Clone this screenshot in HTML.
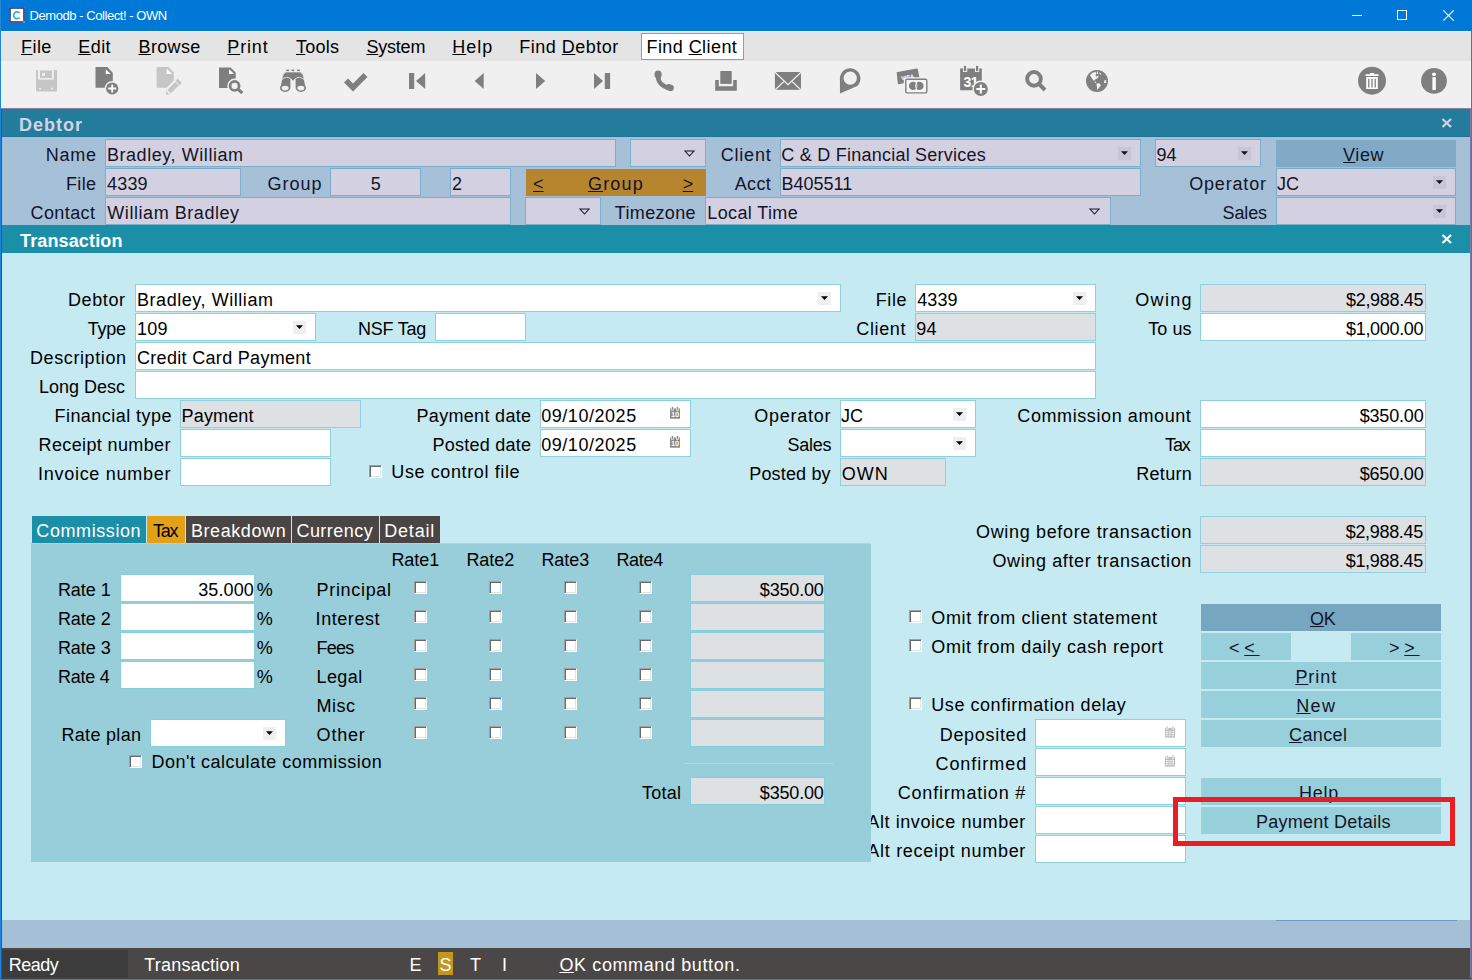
<!DOCTYPE html><html><head><meta charset="utf-8"><title>Collect</title><style>
*{margin:0;padding:0;box-sizing:border-box}
html,body{width:1472px;height:980px;overflow:hidden;background:#C5EAF2;font-family:"Liberation Sans", sans-serif}
.r{position:absolute}
.t{position:absolute;white-space:nowrap;font-family:"Liberation Sans", sans-serif}
.cb{position:absolute;width:13px;height:13px;background:#fff;border-top:1px solid #A0A0A0;border-left:1px solid #A0A0A0;border-right:1px solid #fff;border-bottom:1px solid #fff;box-shadow:inset 1px 1px 0 #696969, inset -1px -1px 0 #E3E3E3}
u{text-decoration:underline;text-underline-offset:1px;text-decoration-thickness:1px}
</style></head><body>
<div class="r" style="left:0px;top:0px;width:1472px;height:980px;background:#1A86E0;"></div>
<div class="r" style="left:0px;top:0px;width:1472px;height:31px;background:#0078D7;"></div>
<div class="r" style="left:0px;top:0px;width:1px;height:31px;background:#2A88D8;"></div>
<svg class="r" style="left:9px;top:7px" width="17" height="17"><rect x="0" y="0" width="16" height="16" fill="#d8d8e8"/><rect x="1" y="1" width="14" height="14" fill="#fff" stroke="#2c3570" stroke-width="1.6"/><path d="M10.6 6.1a3.4 3.4 0 1 0 0 4.4" fill="none" stroke="#3ab0c0" stroke-width="1.7"/><rect x="14" y="14" width="2" height="2" fill="#3ab0c0"/></svg>
<div class="t" style="left:29.60px;top:8px;color:#fff;font-size:13px;line-height:16px;letter-spacing:-0.445px;">Demodb - Collect! - OWN</div>
<div class="r" style="left:1352px;top:15px;width:10px;height:1px;background:#fff;"></div>
<div class="r" style="left:1397px;top:10px;width:10px;height:10px;background:transparent;border:1px solid #fff;"></div>
<svg class="r" style="left:1442px;top:9px" width="13" height="13"><path d="M1.3 1.3L11.7 11.7M11.7 1.3L1.3 11.7" stroke="#fff" stroke-width="1.15"/></svg>
<div class="r" style="left:1px;top:31px;width:1470px;height:30px;background:#E4E4E4;"></div>
<div class="r" style="left:1px;top:31px;width:1470px;height:1px;background:#F4F4F4;"></div>
<div class="t" style="left:21.10px;top:37px;color:#000;font-size:18px;line-height:20px;letter-spacing:0.400px;"><u>F</u>ile</div>
<div class="t" style="left:78.20px;top:37px;color:#000;font-size:18px;line-height:20px;letter-spacing:0.467px;"><u>E</u>dit</div>
<div class="t" style="left:138.50px;top:37px;color:#000;font-size:18px;line-height:20px;letter-spacing:0.360px;"><u>B</u>rowse</div>
<div class="t" style="left:227.30px;top:37px;color:#000;font-size:18px;line-height:20px;letter-spacing:0.850px;"><u>P</u>rint</div>
<div class="t" style="left:296.00px;top:37px;color:#000;font-size:18px;line-height:20px;letter-spacing:0.250px;"><u>T</u>ools</div>
<div class="t" style="left:366.40px;top:37px;color:#000;font-size:18px;line-height:20px;letter-spacing:-0.200px;"><u>S</u>ystem</div>
<div class="t" style="left:452.30px;top:37px;color:#000;font-size:18px;line-height:20px;letter-spacing:0.967px;"><u>H</u>elp</div>
<div class="t" style="left:519.30px;top:37px;color:#000;font-size:18px;line-height:20px;letter-spacing:0.500px;">Find <u>D</u>ebtor</div>
<div class="r" style="left:641px;top:33px;width:103px;height:27px;background:#fff;border:1px solid #9A9A9A;"></div>
<div class="t" style="left:646.50px;top:37px;color:#000;font-size:18px;line-height:20px;letter-spacing:0.430px;">Find <u>C</u>lient</div>
<div class="r" style="left:1px;top:61px;width:1470px;height:47px;background:#F0F0F0;"></div>
<div class="r" style="left:1px;top:61px;width:1px;height:47px;background:#FAFAFA;"></div>
<div class="r" style="left:1470px;top:61px;width:1px;height:47px;background:#FAFAFA;"></div>
<div class="r" style="left:1px;top:108px;width:1470px;height:1px;background:#8A80A0;"></div>
<svg class="r" style="left:0;top:0" width="1472" height="108" viewBox="0 0 1472 108">
<!-- save (disabled) -->
<rect x="36" y="70" width="21" height="21.5" fill="#C6C6C6"/>
<rect x="38" y="70" width="15.8" height="9.6" fill="#F0F0F0"/>
<rect x="40" y="70.5" width="12" height="7.5" fill="#C6C6C6"/>
<rect x="42" y="73" width="3" height="2.8" fill="#F0F0F0"/>
<rect x="39" y="87.8" width="2.2" height="1.6" fill="#F0F0F0"/>
<rect x="50.8" y="87.8" width="2.2" height="1.6" fill="#F0F0F0"/>
<!-- new doc -->
<path d="M95.5 67H107.3L112.8 72.7V87.7H95.5Z" fill="#7F7F7F"/>
<path d="M105.8 69.4V74.1H110.8Z" fill="#fff"/>
<circle cx="112.2" cy="88.5" r="7.5" fill="#F0F0F0"/>
<circle cx="112.2" cy="88.5" r="6.1" fill="#7F7F7F"/>
<path d="M108.2 88.5H116.2M112.2 84.5V92.5" stroke="#fff" stroke-width="1.8"/>
<!-- edit doc (disabled) -->
<path d="M156.6 67.1H168.6L173.7 72.3V80.7L166.7 87.7H156.6Z" fill="#C6C6C6"/>
<path d="M166.7 68.8V73.9H172Z" fill="#fff"/>
<path d="M167.3 89.9L175.4 81.9L179 85.3L170.8 93.4Z" fill="#C6C6C6"/>
<path d="M176.4 80.9L177.6 79.5L181 83L179.7 84.3Z" fill="#C6C6C6" stroke="#C6C6C6" stroke-width="1.2"/>
<path d="M166 91L166 94.7L169.8 94.7Z" fill="#C6C6C6"/>
<!-- search doc -->
<path d="M219 67.5H230.6L235.7 72.5V88.1H219Z" fill="#7F7F7F"/>
<path d="M229.1 69.2V74H234.2Z" fill="#fff"/>
<circle cx="234.6" cy="85.9" r="7.3" fill="#F0F0F0"/>
<path d="M237.6 89L242.5 93.2" stroke="#F0F0F0" stroke-width="6"/>
<circle cx="234.6" cy="85.9" r="4.5" fill="none" stroke="#7F7F7F" stroke-width="2.7"/>
<path d="M237.6 88.9L242.3 93" stroke="#7F7F7F" stroke-width="3.2"/>
<!-- binoculars -->
<path d="M280.2 88.5L282.2 79.6Q286.2 75.6 290.4 78.6V88.5Z" fill="#7F7F7F"/>
<path d="M305.8 88.5L303.8 79.6Q299.8 75.6 295.6 78.6V88.5Z" fill="#7F7F7F"/>
<path d="M285.6 72H300.6Q303.6 74 304.2 79.4Q299.2 75.6 295.2 78.8L293 81.2L290.8 78.8Q286.8 75.6 281.8 79.4Q282.4 74 285.6 72Z" fill="#7F7F7F" stroke="#F0F0F0" stroke-width="0.7"/>
<rect x="286.2" y="69.6" width="2.9" height="1.5" fill="#7F7F7F"/>
<rect x="291.6" y="69.6" width="2.6" height="1.5" fill="#7F7F7F"/>
<rect x="297" y="69.6" width="2.9" height="1.5" fill="#7F7F7F"/>
<ellipse cx="285.1" cy="88.1" rx="5.1" ry="3.8" fill="#7F7F7F"/>
<ellipse cx="300.9" cy="88.1" rx="5.1" ry="3.8" fill="#7F7F7F"/>
<ellipse cx="285.1" cy="88.1" rx="3.5" ry="2.3" fill="#F0F0F0"/>
<ellipse cx="300.9" cy="88.1" rx="3.5" ry="2.3" fill="#F0F0F0"/>
<!-- check -->
<path d="M344 82.5L348 78.5L353 83.5L363.5 73L367.5 77L353 91.5Z" fill="#7F7F7F"/>
<!-- first -->
<rect x="409" y="73" width="5.2" height="16" fill="#7F7F7F"/>
<path d="M425.2 73V89L416 81Z" fill="#7F7F7F"/>
<!-- prev -->
<path d="M483.7 73V89L474.7 81Z" fill="#7F7F7F"/>
<!-- next -->
<path d="M536 73V89L545.2 81Z" fill="#7F7F7F"/>
<!-- last -->
<path d="M594 73V89L603 81Z" fill="#7F7F7F"/>
<rect x="604.8" y="73" width="5.3" height="16" fill="#7F7F7F"/>
<!-- phone -->
<path d="M658.3 76.5Q657.8 84.5 668.5 88" fill="none" stroke="#7F7F7F" stroke-width="4.6"/>
<ellipse cx="658.1" cy="74.6" rx="3.6" ry="4.1" fill="#7F7F7F"/>
<ellipse cx="669.8" cy="87.6" rx="4.1" ry="3.4" fill="#7F7F7F" transform="rotate(20 669.8 87.6)"/>
<!-- tray -->
<rect x="720.3" y="71" width="11.4" height="12.9" fill="#7F7F7F"/>
<path d="M715.2 80H718.8V86.2H733.2V80H736.8V90.8H715.2Z" fill="#7F7F7F"/>
<!-- mail -->
<rect x="774.9" y="72" width="26.1" height="17.8" fill="#7F7F7F"/>
<path d="M775 72.2L788 84.6L801 72.2M783.8 81.6L775.2 89.7M792.2 81.6L800.8 89.7" fill="none" stroke="#F0F0F0" stroke-width="1.3"/>
<!-- bubble -->
<path fill-rule="evenodd" d="M839.9 78.2A10.3 10.3 0 1 1 857.3 86L840 93.4ZM843.6 78.2A6.6 6.6 0 1 0 856.8 78.2A6.6 6.6 0 1 0 843.6 78.2Z" fill="#7F7F7F"/>
<!-- visa -->
<path d="M896.6 72.3L916.4 68.4Q917.5 68.3 917.8 69.4L919.8 79.5L899 84.2Q898 84.4 897.8 83.4Z" fill="#7F7F7F"/>
<text x="907.5" y="79.2" font-family="Liberation Sans" font-weight="bold" font-size="5.6" fill="#fff" text-anchor="middle" transform="rotate(-10 907.5 77)">VISA</text>
<rect x="903.8" y="77.3" width="25" height="17.6" rx="2" fill="#F0F0F0"/>
<rect x="905.8" y="79.3" width="21" height="13.6" rx="1.5" fill="#f6f6f6" stroke="#7F7F7F" stroke-width="1.4"/>
<circle cx="913.1" cy="85.9" r="4.2" fill="#7F7F7F"/>
<circle cx="919.4" cy="85.9" r="4.2" fill="#7F7F7F"/>
<path d="M916.25 83.1Q914.7 85.9 916.25 88.7Q917.8 85.9 916.25 83.1Z" fill="none" stroke="#fff" stroke-width="0.8"/>
<!-- calendar plus -->
<path d="M960.1 68.4H963V72H967.2V68.4H975V72H979.2V68.4H981.8V90.3H960.1Z" fill="#7F7F7F"/>
<rect x="963.9" y="65.9" width="2.2" height="5.2" fill="#7F7F7F"/>
<rect x="976" y="65.9" width="2.2" height="5.2" fill="#7F7F7F"/>
<text x="970.8" y="87.3" font-family="Liberation Sans" font-weight="bold" font-size="14" fill="#fff" text-anchor="middle" letter-spacing="-0.5">31</text>
<circle cx="980.8" cy="89" r="8.4" fill="#F0F0F0"/>
<circle cx="980.8" cy="89" r="7" fill="#7F7F7F"/>
<path d="M976.3 89H985.3M980.8 84.5V93.5" stroke="#fff" stroke-width="2"/>
<!-- search -->
<circle cx="1034" cy="78.9" r="6.85" fill="none" stroke="#7F7F7F" stroke-width="3.9"/>
<path d="M1038.5 83.5L1045 90" stroke="#7F7F7F" stroke-width="3.9"/>
<!-- globe -->
<circle cx="1097" cy="81" r="11" fill="#7F7F7F"/>
<path d="M1090 75.2L1092.1 73L1095.5 71.8L1096.4 74L1095.5 75.2L1096.1 76.7L1097.9 75.5L1098.8 76.4L1097.3 78.2L1095.2 79.5L1093.9 81L1092.4 78.9L1090.9 76.7Z" fill="#f4f4f4"/>
<path d="M1096.9 71.6H1098V74H1096.9Z" fill="#f4f4f4"/>
<path d="M1099.4 72.6L1101 73.3L1100.6 75L1099.6 74.3Z" fill="#f4f4f4"/>
<circle cx="1095.5" cy="82.2" r="0.7" fill="#f4f4f4"/>
<path d="M1096.4 83.4L1099.1 83.3L1101 85.6L1099.1 87.6L1097.3 90.4L1096.8 85.8Z" fill="#f4f4f4"/>
<path d="M1104.4 80.5L1106.3 79.9L1106 83.1L1104 83Z" fill="#f4f4f4"/>
<!-- trash -->
<circle cx="1372" cy="80.7" r="14" fill="#7F7F7F"/>
<path d="M1365.6 74.3H1378.6V76H1365.6ZM1370 72.9H1374.2V74.3H1370Z" fill="#fff"/>
<path d="M1366.2 77H1377.8V89H1366.2Z" fill="#fff"/>
<path d="M1368.8 78.8V87.4M1372 78.8V87.4M1375.2 78.8V87.4" stroke="#7F7F7F" stroke-width="1.3"/>
<!-- info -->
<circle cx="1434" cy="80.9" r="12.9" fill="#7F7F7F"/>
<circle cx="1434" cy="74.3" r="1.9" fill="#fff"/>
<rect x="1432.4" y="77.2" width="3.4" height="12.8" fill="#fff"/>
</svg>
<div class="r" style="left:1px;top:109px;width:1470px;height:869px;background:#7E7AA8;"></div>
<div class="r" style="left:1px;top:109px;width:1px;height:869px;background:#4A4A88;"></div>
<div class="r" style="left:2px;top:109px;width:1468px;height:28px;background:#237C9C;"></div>
<div class="r" style="left:2px;top:136px;width:1468px;height:1px;background:#1A7598;"></div>
<div class="t" style="left:19.00px;top:115px;color:#D6D2E6;font-size:18px;line-height:20px;font-weight:bold;letter-spacing:0.980px;">Debtor</div>
<svg class="r" style="left:1441px;top:118px" width="12" height="10"><path d="M1.5 1L10 9M10 1L1.5 9" stroke="#D6D2E6" stroke-width="2.2"/></svg>
<div class="r" style="left:2px;top:137px;width:1468px;height:88px;background:#A6C0D7;"></div>
<div class="t" style="left:45.80px;top:145px;color:#141428;font-size:18px;line-height:20px;letter-spacing:0.733px;">Name</div>
<div class="r" style="left:105px;top:139px;width:511px;height:28px;background:#D3D1E1;border:1px solid #7AAFCB;"></div>
<div class="t" style="left:106.90px;top:145px;color:#141428;font-size:18px;line-height:20px;letter-spacing:0.567px;">Bradley, William</div>
<div class="r" style="left:630px;top:139px;width:76px;height:28px;background:#D3D1E1;border:1px solid #7AAFCB;"></div>
<svg class="r" style="left:684px;top:150px" width="11" height="7"><path d="M1 1h9l-4.5 5z" fill="none" stroke="#1a1a2a" stroke-width="1.1"/></svg>
<div class="t" style="left:720.70px;top:145px;color:#141428;font-size:18px;line-height:20px;letter-spacing:0.800px;">Client</div>
<div class="r" style="left:780px;top:139px;width:361px;height:28px;background:#D3D1E1;border:1px solid #7AAFCB;"></div>
<div class="t" style="left:781.30px;top:145px;color:#141428;font-size:18px;line-height:20px;letter-spacing:0.235px;">C &amp; D Financial Services</div>
<div class="r" style="left:1118px;top:147px;width:13px;height:13px;background:#C7C5D6;"></div>
<svg class="r" style="left:1118px;top:147px" width="13" height="13"><path d="M3 4.3H10L6.5 8Z" fill="#101020"/></svg>
<div class="r" style="left:1155px;top:139px;width:106px;height:28px;background:#D3D1E1;border:1px solid #7AAFCB;"></div>
<div class="t" style="left:1156.50px;top:145px;color:#141428;font-size:18px;line-height:20px;letter-spacing:0.000px;">94</div>
<div class="r" style="left:1238px;top:147px;width:13px;height:13px;background:#C7C5D6;"></div>
<svg class="r" style="left:1238px;top:147px" width="13" height="13"><path d="M3 4.3H10L6.5 8Z" fill="#101020"/></svg>
<div class="r" style="left:1276px;top:140px;width:180px;height:27px;background:#80AAC5;"></div>
<div class="t" style="left:1343.00px;top:145px;color:#141428;font-size:18px;line-height:20px;letter-spacing:0.633px;"><u>V</u>iew</div>
<div class="t" style="left:66.00px;top:174px;color:#141428;font-size:18px;line-height:20px;letter-spacing:0.333px;">File</div>
<div class="r" style="left:105px;top:168px;width:136px;height:28px;background:#D3D1E1;border:1px solid #7AAFCB;"></div>
<div class="t" style="left:107.10px;top:174px;color:#141428;font-size:18px;line-height:20px;letter-spacing:0.133px;">4339</div>
<div class="t" style="left:267.60px;top:174px;color:#141428;font-size:18px;line-height:20px;letter-spacing:1.000px;">Group</div>
<div class="r" style="left:330px;top:168px;width:91px;height:28px;background:#D3D1E1;border:1px solid #7AAFCB;"></div>
<div class="t" style="left:176px;width:400px;text-align:center;top:174px;color:#141428;font-size:18px;line-height:20px;letter-spacing:0.300px;">5</div>
<div class="r" style="left:450px;top:168px;width:61px;height:28px;background:#D3D1E1;border:1px solid #7AAFCB;"></div>
<div class="t" style="left:452px;top:174px;color:#141428;font-size:18px;line-height:20px;letter-spacing:0.300px;">2</div>
<div class="r" style="left:526px;top:169px;width:180px;height:27px;background:#B8852F;"></div>
<div class="t" style="left:533.00px;top:174px;color:#141428;font-size:18px;line-height:20px;letter-spacing:0.000px;"><u>&lt;</u></div>
<div class="t" style="left:588.00px;top:174px;color:#141428;font-size:18px;line-height:20px;letter-spacing:1.175px;"><u>G</u>roup</div>
<div class="t" style="left:682.70px;top:174px;color:#141428;font-size:18px;line-height:20px;letter-spacing:0.000px;"><u>&gt;</u></div>
<div class="t" style="left:734.80px;top:174px;color:#141428;font-size:18px;line-height:20px;letter-spacing:0.300px;">Acct</div>
<div class="r" style="left:780px;top:168px;width:361px;height:28px;background:#D3D1E1;border:1px solid #7AAFCB;"></div>
<div class="t" style="left:781.60px;top:174px;color:#141428;font-size:18px;line-height:20px;letter-spacing:-0.017px;">B405511</div>
<div class="t" style="left:1189.20px;top:174px;color:#141428;font-size:18px;line-height:20px;letter-spacing:0.829px;">Operator</div>
<div class="r" style="left:1276px;top:168px;width:180px;height:28px;background:#D3D1E1;border:1px solid #7AAFCB;"></div>
<div class="t" style="left:1277px;top:174px;color:#141428;font-size:18px;line-height:20px;letter-spacing:0.000px;">JC</div>
<div class="r" style="left:1433px;top:176px;width:13px;height:13px;background:#C7C5D6;"></div>
<svg class="r" style="left:1433px;top:176px" width="13" height="13"><path d="M3 4.3H10L6.5 8Z" fill="#101020"/></svg>
<div class="t" style="left:30.50px;top:203px;color:#141428;font-size:18px;line-height:20px;letter-spacing:0.417px;">Contact</div>
<div class="r" style="left:105px;top:197px;width:406px;height:28px;background:#D3D1E1;border:1px solid #7AAFCB;"></div>
<div class="t" style="left:107.30px;top:203px;color:#141428;font-size:18px;line-height:20px;letter-spacing:0.557px;">William Bradley</div>
<div class="r" style="left:525px;top:197px;width:76px;height:28px;background:#D3D1E1;border:1px solid #7AAFCB;"></div>
<svg class="r" style="left:579px;top:208px" width="11" height="7"><path d="M1 1h9l-4.5 5z" fill="none" stroke="#1a1a2a" stroke-width="1.1"/></svg>
<div class="t" style="left:614.80px;top:203px;color:#141428;font-size:18px;line-height:20px;letter-spacing:0.343px;">Timezone</div>
<div class="r" style="left:705px;top:197px;width:406px;height:28px;background:#D3D1E1;border:1px solid #7AAFCB;"></div>
<div class="t" style="left:707.30px;top:203px;color:#141428;font-size:18px;line-height:20px;letter-spacing:0.378px;">Local Time</div>
<svg class="r" style="left:1089px;top:208px" width="11" height="7"><path d="M1 1h9l-4.5 5z" fill="none" stroke="#1a1a2a" stroke-width="1.1"/></svg>
<div class="t" style="left:1222.50px;top:203px;color:#141428;font-size:18px;line-height:20px;letter-spacing:-0.125px;">Sales</div>
<div class="r" style="left:1276px;top:197px;width:180px;height:28px;background:#D3D1E1;border:1px solid #7AAFCB;"></div>
<div class="r" style="left:1433px;top:205px;width:13px;height:13px;background:#C7C5D6;"></div>
<svg class="r" style="left:1433px;top:205px" width="13" height="13"><path d="M3 4.3H10L6.5 8Z" fill="#101020"/></svg>
<div class="r" style="left:2px;top:225px;width:1468px;height:28px;background:#1C8FA8;"></div>
<div class="t" style="left:20.00px;top:231px;color:#fff;font-size:18px;line-height:20px;font-weight:bold;letter-spacing:0.140px;">Transaction</div>
<svg class="r" style="left:1441px;top:234px" width="12" height="10"><path d="M1.5 1L10 9M10 1L1.5 9" stroke="#fff" stroke-width="2.2"/></svg>
<div class="r" style="left:2px;top:253px;width:1468px;height:667px;background:#C5EAF2;"></div>
<div class="t" style="left:67.90px;top:290px;color:#000;font-size:18px;line-height:20px;letter-spacing:0.620px;">Debtor</div>
<div class="r" style="left:135px;top:284px;width:706px;height:28px;background:#fff;border:1px solid #8ED0E0;"></div>
<div class="t" style="left:137.00px;top:290px;color:#000;font-size:18px;line-height:20px;letter-spacing:0.553px;">Bradley, William</div>
<div class="r" style="left:818px;top:292px;width:13px;height:13px;background:#EFEFEF;"></div>
<svg class="r" style="left:818px;top:292px" width="13" height="13"><path d="M3 4.3H10L6.5 8Z" fill="#000"/></svg>
<div class="t" style="left:875.80px;top:290px;color:#000;font-size:18px;line-height:20px;letter-spacing:0.567px;">File</div>
<div class="r" style="left:915px;top:284px;width:181px;height:28px;background:#fff;border:1px solid #8ED0E0;"></div>
<div class="t" style="left:917.20px;top:290px;color:#000;font-size:18px;line-height:20px;letter-spacing:0.133px;">4339</div>
<div class="r" style="left:1073px;top:292px;width:13px;height:13px;background:#EFEFEF;"></div>
<svg class="r" style="left:1073px;top:292px" width="13" height="13"><path d="M3 4.3H10L6.5 8Z" fill="#000"/></svg>
<div class="t" style="left:1135.30px;top:290px;color:#000;font-size:18px;line-height:20px;letter-spacing:1.300px;">Owing</div>
<div class="r" style="left:1200px;top:284px;width:226px;height:28px;background:#DEE1E3;border:1px solid #8ED0E0;"></div>
<div class="t" style="left:1346.00px;top:290px;color:#000;font-size:18px;line-height:20px;letter-spacing:-0.312px;">$2,988.45</div>
<div class="t" style="left:87.80px;top:319px;color:#000;font-size:18px;line-height:20px;letter-spacing:-0.267px;">Type</div>
<div class="r" style="left:135px;top:313px;width:181px;height:28px;background:#fff;border:1px solid #8ED0E0;"></div>
<div class="t" style="left:137.00px;top:319px;color:#000;font-size:18px;line-height:20px;letter-spacing:0.200px;">109</div>
<div class="r" style="left:293px;top:321px;width:13px;height:13px;background:#EFEFEF;"></div>
<svg class="r" style="left:293px;top:321px" width="13" height="13"><path d="M3 4.3H10L6.5 8Z" fill="#000"/></svg>
<div class="t" style="left:358.00px;top:319px;color:#000;font-size:18px;line-height:20px;letter-spacing:-0.233px;">NSF Tag</div>
<div class="r" style="left:435px;top:313px;width:91px;height:28px;background:#fff;border:1px solid #8ED0E0;"></div>
<div class="t" style="left:856.30px;top:319px;color:#000;font-size:18px;line-height:20px;letter-spacing:0.640px;">Client</div>
<div class="r" style="left:915px;top:313px;width:181px;height:28px;background:#DEE1E3;border:1px solid #8ED0E0;"></div>
<div class="t" style="left:916.20px;top:319px;color:#000;font-size:18px;line-height:20px;letter-spacing:0.300px;">94</div>
<div class="t" style="left:1148.20px;top:319px;color:#000;font-size:18px;line-height:20px;letter-spacing:0.075px;">To us</div>
<div class="r" style="left:1200px;top:313px;width:226px;height:28px;background:#fff;border:1px solid #8ED0E0;"></div>
<div class="t" style="left:1346.00px;top:319px;color:#000;font-size:18px;line-height:20px;letter-spacing:-0.312px;">$1,000.00</div>
<div class="t" style="left:30.00px;top:348px;color:#000;font-size:18px;line-height:20px;letter-spacing:0.600px;">Description</div>
<div class="r" style="left:135px;top:342px;width:961px;height:28px;background:#fff;border:1px solid #8ED0E0;"></div>
<div class="t" style="left:137.00px;top:348px;color:#000;font-size:18px;line-height:20px;letter-spacing:0.311px;">Credit Card Payment</div>
<div class="t" style="left:39.00px;top:377px;color:#000;font-size:18px;line-height:20px;letter-spacing:0.000px;">Long Desc</div>
<div class="r" style="left:135px;top:371px;width:961px;height:28px;background:#fff;border:1px solid #8ED0E0;"></div>
<div class="t" style="left:54.50px;top:406px;color:#000;font-size:18px;line-height:20px;letter-spacing:0.454px;">Financial type</div>
<div class="r" style="left:180px;top:400px;width:181px;height:28px;background:#DEE1E3;border:1px solid #8ED0E0;"></div>
<div class="t" style="left:181.60px;top:406px;color:#000;font-size:18px;line-height:20px;letter-spacing:0.150px;">Payment</div>
<div class="t" style="left:416.50px;top:406px;color:#000;font-size:18px;line-height:20px;letter-spacing:0.318px;">Payment date</div>
<div class="r" style="left:540px;top:400px;width:151px;height:28px;background:#fff;border:1px solid #8ED0E0;"></div>
<div class="t" style="left:541.20px;top:406px;color:#000;font-size:18px;line-height:20px;letter-spacing:0.544px;">09/10/2025</div>
<svg class="r" style="left:669px;top:406px" width="14" height="14"><rect x="1" y="2.4" width="10" height="10.3" fill="#8a8a8a"/><rect x="2.3" y="0.6" width="2.2" height="3.6" fill="#8a8a8a" stroke="#fff" stroke-width="0.7"/><rect x="7.5" y="0.6" width="2.2" height="3.6" fill="#8a8a8a" stroke="#fff" stroke-width="0.7"/><text x="5.9" y="11.3" font-size="7.4" font-family="Liberation Sans" font-weight="bold" text-anchor="middle" fill="#fff" letter-spacing="-0.3" style="text-rendering:geometricPrecision">10</text></svg>
<div class="t" style="left:754.20px;top:406px;color:#000;font-size:18px;line-height:20px;letter-spacing:0.757px;">Operator</div>
<div class="r" style="left:840px;top:400px;width:136px;height:28px;background:#fff;border:1px solid #8ED0E0;"></div>
<div class="t" style="left:841px;top:406px;color:#000;font-size:18px;line-height:20px;letter-spacing:0.000px;">JC</div>
<div class="r" style="left:953px;top:408px;width:13px;height:13px;background:#EFEFEF;"></div>
<svg class="r" style="left:953px;top:408px" width="13" height="13"><path d="M3 4.3H10L6.5 8Z" fill="#000"/></svg>
<div class="t" style="left:1017.30px;top:406px;color:#000;font-size:18px;line-height:20px;letter-spacing:0.594px;">Commission amount</div>
<div class="r" style="left:1200px;top:400px;width:226px;height:28px;background:#fff;border:1px solid #8ED0E0;"></div>
<div class="t" style="left:1359.70px;top:406px;color:#000;font-size:18px;line-height:20px;letter-spacing:-0.183px;">$350.00</div>
<div class="t" style="left:38.60px;top:435px;color:#000;font-size:18px;line-height:20px;letter-spacing:0.369px;">Receipt number</div>
<div class="r" style="left:180px;top:429px;width:151px;height:28px;background:#fff;border:1px solid #8ED0E0;"></div>
<div class="t" style="left:432.40px;top:435px;color:#000;font-size:18px;line-height:20px;letter-spacing:0.260px;">Posted date</div>
<div class="r" style="left:540px;top:429px;width:151px;height:28px;background:#fff;border:1px solid #8ED0E0;"></div>
<div class="t" style="left:541.20px;top:435px;color:#000;font-size:18px;line-height:20px;letter-spacing:0.544px;">09/10/2025</div>
<svg class="r" style="left:669px;top:435px" width="14" height="14"><rect x="1" y="2.4" width="10" height="10.3" fill="#8a8a8a"/><rect x="2.3" y="0.6" width="2.2" height="3.6" fill="#8a8a8a" stroke="#fff" stroke-width="0.7"/><rect x="7.5" y="0.6" width="2.2" height="3.6" fill="#8a8a8a" stroke="#fff" stroke-width="0.7"/><text x="5.9" y="11.3" font-size="7.4" font-family="Liberation Sans" font-weight="bold" text-anchor="middle" fill="#fff" letter-spacing="-0.3" style="text-rendering:geometricPrecision">10</text></svg>
<div class="t" style="left:787.40px;top:435px;color:#000;font-size:18px;line-height:20px;letter-spacing:-0.225px;">Sales</div>
<div class="r" style="left:840px;top:429px;width:136px;height:28px;background:#fff;border:1px solid #8ED0E0;"></div>
<div class="r" style="left:953px;top:437px;width:13px;height:13px;background:#EFEFEF;"></div>
<svg class="r" style="left:953px;top:437px" width="13" height="13"><path d="M3 4.3H10L6.5 8Z" fill="#000"/></svg>
<div class="t" style="left:1165.10px;top:435px;color:#000;font-size:18px;line-height:20px;letter-spacing:-1.150px;">Tax</div>
<div class="r" style="left:1200px;top:429px;width:226px;height:28px;background:#fff;border:1px solid #8ED0E0;"></div>
<div class="t" style="left:38.00px;top:464px;color:#000;font-size:18px;line-height:20px;letter-spacing:0.723px;">Invoice number</div>
<div class="r" style="left:180px;top:458px;width:151px;height:28px;background:#fff;border:1px solid #8ED0E0;"></div>
<div class="cb" style="left:369px;top:465px"></div>
<div class="t" style="left:391.30px;top:462px;color:#000;font-size:18px;line-height:20px;letter-spacing:0.613px;">Use control file</div>
<div class="t" style="left:749.30px;top:464px;color:#000;font-size:18px;line-height:20px;letter-spacing:0.150px;">Posted by</div>
<div class="r" style="left:840px;top:458px;width:106px;height:28px;background:#DEE1E3;border:1px solid #8ED0E0;"></div>
<div class="t" style="left:841.70px;top:464px;color:#000;font-size:18px;line-height:20px;letter-spacing:1.000px;">OWN</div>
<div class="t" style="left:1136.20px;top:464px;color:#000;font-size:18px;line-height:20px;letter-spacing:0.320px;">Return</div>
<div class="r" style="left:1200px;top:458px;width:226px;height:28px;background:#DEE1E3;border:1px solid #8ED0E0;"></div>
<div class="t" style="left:1359.70px;top:464px;color:#000;font-size:18px;line-height:20px;letter-spacing:-0.183px;">$650.00</div>
<div class="t" style="left:976.00px;top:522px;color:#000;font-size:18px;line-height:20px;letter-spacing:0.665px;">Owing before transaction</div>
<div class="r" style="left:1200px;top:516px;width:226px;height:28px;background:#DEE1E3;border:1px solid #8ED0E0;"></div>
<div class="t" style="left:1345.70px;top:522px;color:#000;font-size:18px;line-height:20px;letter-spacing:-0.312px;">$2,988.45</div>
<div class="t" style="left:992.40px;top:551px;color:#000;font-size:18px;line-height:20px;letter-spacing:0.632px;">Owing after transaction</div>
<div class="r" style="left:1200px;top:545px;width:226px;height:28px;background:#DEE1E3;border:1px solid #8ED0E0;"></div>
<div class="t" style="left:1345.70px;top:551px;color:#000;font-size:18px;line-height:20px;letter-spacing:-0.312px;">$1,988.45</div>
<div class="cb" style="left:909px;top:610px"></div>
<div class="t" style="left:931.30px;top:608px;color:#000;font-size:18px;line-height:20px;letter-spacing:0.628px;">Omit from client statement</div>
<div class="cb" style="left:909px;top:639px"></div>
<div class="t" style="left:931.30px;top:637px;color:#000;font-size:18px;line-height:20px;letter-spacing:0.600px;">Omit from daily cash report</div>
<div class="cb" style="left:909px;top:697px"></div>
<div class="t" style="left:931.30px;top:695px;color:#000;font-size:18px;line-height:20px;letter-spacing:0.543px;">Use confirmation delay</div>
<div class="t" style="left:939.70px;top:725px;color:#000;font-size:18px;line-height:20px;letter-spacing:0.700px;">Deposited</div>
<div class="r" style="left:1035px;top:719px;width:151px;height:28px;background:#fff;border:1px solid #8ED0E0;"></div>
<div class="t" style="left:935.40px;top:754px;color:#000;font-size:18px;line-height:20px;letter-spacing:0.987px;">Confirmed</div>
<div class="r" style="left:1035px;top:748px;width:151px;height:28px;background:#fff;border:1px solid #8ED0E0;"></div>
<div class="t" style="left:897.70px;top:783px;color:#000;font-size:18px;line-height:20px;letter-spacing:0.815px;">Confirmation #</div>
<div class="r" style="left:1035px;top:777px;width:151px;height:28px;background:#fff;border:1px solid #8ED0E0;"></div>
<div class="t" style="left:867.30px;top:812px;color:#000;font-size:18px;line-height:20px;letter-spacing:0.588px;">Alt invoice number</div>
<div class="r" style="left:1035px;top:806px;width:151px;height:28px;background:#fff;border:1px solid #8ED0E0;"></div>
<div class="t" style="left:867.30px;top:841px;color:#000;font-size:18px;line-height:20px;letter-spacing:0.706px;">Alt receipt number</div>
<div class="r" style="left:1035px;top:835px;width:151px;height:28px;background:#fff;border:1px solid #8ED0E0;"></div>
<svg class="r" style="left:1164px;top:726px" width="14" height="14"><rect x="1" y="1.8" width="10" height="9.8" fill="#BDBDBD"/><rect x="2.2" y="0" width="1.8" height="3.2" fill="#BDBDBD" stroke="#fff" stroke-width="0.6"/><rect x="8" y="0" width="1.8" height="3.2" fill="#BDBDBD" stroke="#fff" stroke-width="0.6"/><rect x="2" y="5" width="1.6" height="1.3" fill="#fff"/><rect x="8.4" y="5" width="1.6" height="1.3" fill="#fff"/><rect x="2" y="7" width="1.6" height="1.3" fill="#fff"/><rect x="8.4" y="7" width="1.6" height="1.3" fill="#fff"/><rect x="2" y="9" width="1.6" height="1.3" fill="#f0f0f0"/><rect x="8.4" y="9" width="1.6" height="1.3" fill="#f0f0f0"/><rect x="4.4" y="5" width="3.2" height="1.3" fill="#e6e6e6"/><rect x="4.4" y="7" width="3.2" height="1.3" fill="#e6e6e6"/><rect x="4.4" y="9" width="3.2" height="1.3" fill="#e0e0e0"/></svg>
<svg class="r" style="left:1164px;top:755px" width="14" height="14"><rect x="1" y="1.8" width="10" height="9.8" fill="#BDBDBD"/><rect x="2.2" y="0" width="1.8" height="3.2" fill="#BDBDBD" stroke="#fff" stroke-width="0.6"/><rect x="8" y="0" width="1.8" height="3.2" fill="#BDBDBD" stroke="#fff" stroke-width="0.6"/><rect x="2" y="5" width="1.6" height="1.3" fill="#fff"/><rect x="8.4" y="5" width="1.6" height="1.3" fill="#fff"/><rect x="2" y="7" width="1.6" height="1.3" fill="#fff"/><rect x="8.4" y="7" width="1.6" height="1.3" fill="#fff"/><rect x="2" y="9" width="1.6" height="1.3" fill="#f0f0f0"/><rect x="8.4" y="9" width="1.6" height="1.3" fill="#f0f0f0"/><rect x="4.4" y="5" width="3.2" height="1.3" fill="#e6e6e6"/><rect x="4.4" y="7" width="3.2" height="1.3" fill="#e6e6e6"/><rect x="4.4" y="9" width="3.2" height="1.3" fill="#e0e0e0"/></svg>
<div class="r" style="left:1201px;top:604px;width:240px;height:27px;background:#76A6C0;"></div>
<div class="t" style="left:1310.00px;top:609px;color:#141428;font-size:18px;line-height:20px;letter-spacing:-0.200px;"><u>O</u>K</div>
<div class="r" style="left:1201px;top:633px;width:90px;height:27px;background:#97CFDA;"></div>
<div class="t" style="left:1229.00px;top:638px;color:#141428;font-size:18px;line-height:20px;letter-spacing:4.800px;">&lt;<u>&lt;</u></div>
<div class="r" style="left:1351px;top:633px;width:90px;height:27px;background:#97CFDA;"></div>
<div class="t" style="left:1389.00px;top:638px;color:#141428;font-size:18px;line-height:20px;letter-spacing:4.800px;">&gt;<u>&gt;</u></div>
<div class="r" style="left:1201px;top:662px;width:240px;height:27px;background:#97CFDA;"></div>
<div class="t" style="left:1295.40px;top:667px;color:#141428;font-size:18px;line-height:20px;letter-spacing:0.950px;"><u>P</u>rint</div>
<div class="r" style="left:1201px;top:691px;width:240px;height:27px;background:#97CFDA;"></div>
<div class="t" style="left:1296.30px;top:696px;color:#141428;font-size:18px;line-height:20px;letter-spacing:1.300px;"><u>N</u>ew</div>
<div class="r" style="left:1201px;top:720px;width:240px;height:27px;background:#97CFDA;"></div>
<div class="t" style="left:1289.00px;top:725px;color:#141428;font-size:18px;line-height:20px;letter-spacing:0.380px;"><u>C</u>ancel</div>
<div class="r" style="left:1201px;top:778px;width:240px;height:27px;background:#97CFDA;"></div>
<div class="t" style="left:1299.10px;top:783px;color:#141428;font-size:18px;line-height:20px;letter-spacing:0.733px;">Help</div>
<div class="r" style="left:1201px;top:807px;width:240px;height:27px;background:#97CFDA;"></div>
<div class="t" style="left:1256.00px;top:812px;color:#141428;font-size:18px;line-height:20px;letter-spacing:0.250px;">Payment Details</div>
<div class="r" style="left:32px;top:516px;width:114px;height:27px;background:#1C8FA8;"></div>
<div class="t" style="left:36.30px;top:521px;color:#fff;font-size:18px;line-height:20px;letter-spacing:0.589px;">Commission</div>
<div class="r" style="left:147px;top:516px;width:38px;height:27px;background:#E2A116;"></div>
<div class="t" style="left:153.00px;top:521px;color:#000;font-size:18px;line-height:20px;letter-spacing:-1.300px;">Tax</div>
<div class="r" style="left:186px;top:516px;width:105px;height:27px;background:#4A4544;"></div>
<div class="t" style="left:190.90px;top:521px;color:#fff;font-size:18px;line-height:20px;letter-spacing:0.588px;">Breakdown</div>
<div class="r" style="left:292px;top:516px;width:87px;height:27px;background:#4A4544;"></div>
<div class="t" style="left:296.40px;top:521px;color:#fff;font-size:18px;line-height:20px;letter-spacing:0.486px;">Currency</div>
<div class="r" style="left:380px;top:516px;width:60px;height:27px;background:#4A4544;"></div>
<div class="t" style="left:384.30px;top:521px;color:#fff;font-size:18px;line-height:20px;letter-spacing:0.780px;">Detail</div>
<div class="r" style="left:31px;top:543px;width:840px;height:319px;background:#97CEDA;"></div>
<div class="r" style="left:31px;top:543px;width:840px;height:1px;background:#A3D8E4;"></div>
<div class="t" style="left:57.90px;top:580px;color:#000;font-size:18px;line-height:20px;letter-spacing:-0.040px;">Rate 1</div>
<div class="r" style="left:120px;top:574px;width:135px;height:28px;background:#fff;border:1px solid #88CFDE;"></div>
<div class="t" style="left:256.70px;top:580px;color:#000;font-size:18px;line-height:20px;letter-spacing:0.000px;">%</div>
<div class="t" style="left:57.90px;top:609px;color:#000;font-size:18px;line-height:20px;letter-spacing:-0.040px;">Rate 2</div>
<div class="r" style="left:120px;top:603px;width:135px;height:28px;background:#fff;border:1px solid #88CFDE;"></div>
<div class="t" style="left:256.70px;top:609px;color:#000;font-size:18px;line-height:20px;letter-spacing:0.000px;">%</div>
<div class="t" style="left:57.90px;top:638px;color:#000;font-size:18px;line-height:20px;letter-spacing:-0.040px;">Rate 3</div>
<div class="r" style="left:120px;top:632px;width:135px;height:28px;background:#fff;border:1px solid #88CFDE;"></div>
<div class="t" style="left:256.70px;top:638px;color:#000;font-size:18px;line-height:20px;letter-spacing:0.000px;">%</div>
<div class="t" style="left:57.90px;top:667px;color:#000;font-size:18px;line-height:20px;letter-spacing:-0.240px;">Rate 4</div>
<div class="r" style="left:120px;top:661px;width:135px;height:28px;background:#fff;border:1px solid #88CFDE;"></div>
<div class="t" style="left:256.70px;top:667px;color:#000;font-size:18px;line-height:20px;letter-spacing:0.000px;">%</div>
<div class="t" style="left:198.20px;top:580px;color:#000;font-size:18px;line-height:20px;letter-spacing:0.120px;">35.000</div>
<div class="t" style="left:61.40px;top:725px;color:#000;font-size:18px;line-height:20px;letter-spacing:0.325px;">Rate plan</div>
<div class="r" style="left:150px;top:719px;width:136px;height:28px;background:#fff;border:1px solid #88CFDE;"></div>
<div class="r" style="left:263px;top:727px;width:13px;height:13px;background:#EFEFEF;"></div>
<svg class="r" style="left:263px;top:727px" width="13" height="13"><path d="M3 4.3H10L6.5 8Z" fill="#000"/></svg>
<div class="cb" style="left:129px;top:755px"></div>
<div class="t" style="left:151.50px;top:752px;color:#000;font-size:18px;line-height:20px;letter-spacing:0.512px;">Don't calculate commission</div>
<div class="t" style="left:391.40px;top:550px;color:#000;font-size:18px;line-height:20px;letter-spacing:-0.050px;">Rate1</div>
<div class="t" style="left:466.40px;top:550px;color:#000;font-size:18px;line-height:20px;letter-spacing:-0.050px;">Rate2</div>
<div class="t" style="left:541.40px;top:550px;color:#000;font-size:18px;line-height:20px;letter-spacing:-0.050px;">Rate3</div>
<div class="t" style="left:616.40px;top:550px;color:#000;font-size:18px;line-height:20px;letter-spacing:-0.300px;">Rate4</div>
<div class="t" style="left:316.60px;top:580px;color:#000;font-size:18px;line-height:20px;letter-spacing:0.675px;">Principal</div>
<div class="cb" style="left:414px;top:581px"></div>
<div class="cb" style="left:489px;top:581px"></div>
<div class="cb" style="left:564px;top:581px"></div>
<div class="cb" style="left:639px;top:581px"></div>
<div class="r" style="left:690px;top:574px;width:135px;height:28px;background:#DEE1E3;border:1px solid #88CFDE;"></div>
<div class="t" style="left:315.60px;top:609px;color:#000;font-size:18px;line-height:20px;letter-spacing:0.557px;">Interest</div>
<div class="cb" style="left:414px;top:610px"></div>
<div class="cb" style="left:489px;top:610px"></div>
<div class="cb" style="left:564px;top:610px"></div>
<div class="cb" style="left:639px;top:610px"></div>
<div class="r" style="left:690px;top:603px;width:135px;height:28px;background:#DEE1E3;border:1px solid #88CFDE;"></div>
<div class="t" style="left:316.60px;top:638px;color:#000;font-size:18px;line-height:20px;letter-spacing:-0.767px;">Fees</div>
<div class="cb" style="left:414px;top:639px"></div>
<div class="cb" style="left:489px;top:639px"></div>
<div class="cb" style="left:564px;top:639px"></div>
<div class="cb" style="left:639px;top:639px"></div>
<div class="r" style="left:690px;top:632px;width:135px;height:28px;background:#DEE1E3;border:1px solid #88CFDE;"></div>
<div class="t" style="left:316.60px;top:667px;color:#000;font-size:18px;line-height:20px;letter-spacing:0.375px;">Legal</div>
<div class="cb" style="left:414px;top:668px"></div>
<div class="cb" style="left:489px;top:668px"></div>
<div class="cb" style="left:564px;top:668px"></div>
<div class="cb" style="left:639px;top:668px"></div>
<div class="r" style="left:690px;top:661px;width:135px;height:28px;background:#DEE1E3;border:1px solid #88CFDE;"></div>
<div class="t" style="left:316.60px;top:696px;color:#000;font-size:18px;line-height:20px;letter-spacing:0.467px;">Misc</div>
<div class="cb" style="left:414px;top:697px"></div>
<div class="cb" style="left:489px;top:697px"></div>
<div class="cb" style="left:564px;top:697px"></div>
<div class="cb" style="left:639px;top:697px"></div>
<div class="r" style="left:690px;top:690px;width:135px;height:28px;background:#DEE1E3;border:1px solid #88CFDE;"></div>
<div class="t" style="left:316.60px;top:725px;color:#000;font-size:18px;line-height:20px;letter-spacing:0.800px;">Other</div>
<div class="cb" style="left:414px;top:726px"></div>
<div class="cb" style="left:489px;top:726px"></div>
<div class="cb" style="left:564px;top:726px"></div>
<div class="cb" style="left:639px;top:726px"></div>
<div class="r" style="left:690px;top:719px;width:135px;height:28px;background:#DEE1E3;border:1px solid #88CFDE;"></div>
<div class="t" style="left:759.80px;top:580px;color:#000;font-size:18px;line-height:20px;letter-spacing:-0.167px;">$350.00</div>
<div class="r" style="left:684px;top:763px;width:149px;height:1px;background:#C4D4D8;"></div>
<div class="t" style="left:641.90px;top:783px;color:#000;font-size:18px;line-height:20px;letter-spacing:0.275px;">Total</div>
<div class="r" style="left:690px;top:777px;width:135px;height:28px;background:#DEE1E3;border:1px solid #88CFDE;"></div>
<div class="t" style="left:759.80px;top:783px;color:#000;font-size:18px;line-height:20px;letter-spacing:-0.167px;">$350.00</div>
<div class="r" style="left:1173px;top:797px;width:282px;height:49px;border:5px solid #EC1C24"></div>
<div class="r" style="left:2px;top:920px;width:1468px;height:28px;background:#A5BFD6;"></div>
<div class="r" style="left:1276px;top:920px;width:181px;height:1px;background:#6C9DB6;"></div>
<div class="r" style="left:2px;top:948px;width:1468px;height:30px;background:#4B4747;"></div>
<div class="r" style="left:1px;top:978px;width:1470px;height:1px;background:#4B4540;"></div>
<div class="r" style="left:2px;top:950px;width:126px;height:28px;background:#3C3C3C;"></div>
<div class="t" style="left:8.80px;top:955px;color:#fff;font-size:18px;line-height:20px;letter-spacing:-0.525px;">Ready</div>
<div class="t" style="left:144.30px;top:955px;color:#fff;font-size:18px;line-height:20px;letter-spacing:0.210px;">Transaction</div>
<div class="t" style="left:409.60px;top:955px;color:#fff;font-size:18px;line-height:20px;letter-spacing:0.000px;">E</div>
<div class="r" style="left:438px;top:952px;width:15px;height:23px;background:#C4961C;"></div>
<div class="t" style="left:439.50px;top:955px;color:#fff;font-size:18px;line-height:20px;letter-spacing:0.000px;">S</div>
<div class="t" style="left:470.00px;top:955px;color:#fff;font-size:18px;line-height:20px;letter-spacing:0.000px;">T</div>
<div class="t" style="left:501.90px;top:955px;color:#fff;font-size:18px;line-height:20px;letter-spacing:0.000px;">I</div>
<div class="t" style="left:559.40px;top:955px;color:#fff;font-size:18px;line-height:20px;letter-spacing:0.618px;"><u>O</u>K command button.</div>
</body></html>
